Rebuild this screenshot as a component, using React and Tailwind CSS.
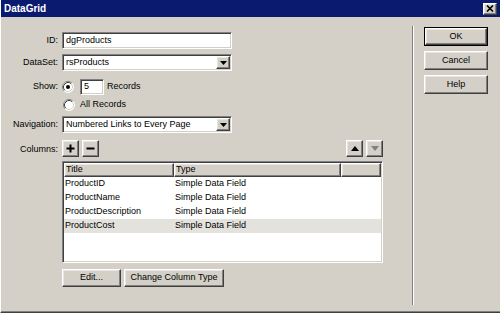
import React from "react";

const raised =
  "bg-[#d4d0c8] border border-t-white border-l-white border-r-[#404040] border-b-[#404040] shadow-[inset_-1px_-1px_0_#808080,inset_1px_1px_0_#e8e6e1]";
const sunken =
  "bg-white border border-t-[#808080] border-l-[#808080] border-r-white border-b-white shadow-[inset_1px_1px_0_#404040,inset_-1px_-1px_0_#d4d0c8]";

function Label({ children, className = "" }) {
  return <div className={"w-[57px] shrink-0 text-right " + className}>{children}</div>;
}

function DownArrow({ color = "black" }) {
  return (
    <svg width="7" height="4" viewBox="0 0 7 4">
      <path d="M0 0H7L3.5 4Z" fill={color} />
    </svg>
  );
}

function Select({ value }) {
  return (
    <div className={sunken + " w-[170px] h-[17px] flex items-center p-[1px]"}>
      <span className="flex-1 pl-[2px] leading-none">{value}</span>
      <div className={raised + " w-[14px] h-[13px] flex items-center justify-center"}>
        <DownArrow />
      </div>
    </div>
  );
}

function Radio({ checked }) {
  return (
    <svg width="12" height="12" viewBox="0 0 12 12" className="shrink-0">
      <circle cx="6" cy="6" r="5.5" fill="white" />
      <path d="M2.11 9.89A5.5 5.5 0 0 1 9.89 2.11" stroke="#808080" fill="none" />
      <path d="M2.82 9.18A4.5 4.5 0 0 1 9.18 2.82" stroke="#404040" fill="none" />
      <path d="M9.89 2.11A5.5 5.5 0 0 1 2.11 9.89" stroke="#ffffff" fill="none" />
      <path d="M9.18 2.82A4.5 4.5 0 0 1 2.82 9.18" stroke="#d4d0c8" fill="none" />
      {checked && <circle cx="6" cy="6" r="2" fill="black" />}
    </svg>
  );
}

function Btn({ children, className = "" }) {
  return (
    <div className={raised + " flex items-center justify-center " + className}>{children}</div>
  );
}

const rows = [
  ["ProductID", "Simple Data Field"],
  ["ProductName", "Simple Data Field"],
  ["ProductDescription", "Simple Data Field"],
  ["ProductCost", "Simple Data Field"],
];

export default function App() {
  return (
    <div className="w-[500px] h-[313px] bg-[#d4d0c8] flex flex-col border-l border-l-white border-b border-b-[#404040] font-['Liberation_Sans',Arial,sans-serif] text-[9px] text-black overflow-hidden">
      {/* Title bar */}
      <div className="h-[17px] shrink-0 bg-[#0a1a6e] flex items-center justify-between pl-[3px] pr-[3px]">
        <span className="text-white font-bold text-[10px] leading-none">DataGrid</span>
        <div className={raised + " w-[14px] h-[12px] flex items-center justify-center"}>
          <svg width="8" height="7" viewBox="0 0 8 7">
            <path d="M1 0.5L7 6.5M7 0.5L1 6.5" stroke="black" strokeWidth="1.6" />
          </svg>
        </div>
      </div>

      {/* Body */}
      <div className="flex-1 flex border-b border-b-[#808080]">
        {/* Left panel */}
        <div className="w-[411px] shrink-0 flex flex-col pt-[15px]">
          {/* ID */}
          <div className="flex items-center gap-[4px] h-[17px]">
            <Label>ID:</Label>
            <div className={sunken + " w-[170px] h-[17px] flex items-center pl-[3px]"}>dgProducts</div>
          </div>
          {/* DataSet */}
          <div className="flex items-center gap-[4px] h-[17px] mt-[5px]">
            <Label>DataSet:</Label>
            <Select value="rsProducts" />
          </div>
          {/* Show */}
          <div className="flex items-center gap-[4px] h-[16px] mt-[8px]">
            <Label>Show:</Label>
            <Radio checked />
            <div className={sunken + " w-[24px] h-[16px] ml-[2px] flex items-center pl-[3px]"}>5</div>
            <span className="ml-[-1px]">Records</span>
          </div>
          {/* All records */}
          <div className="flex items-center h-[16px] mt-[2px] pl-[62px] gap-[5px]">
            <Radio />
            <span>All Records</span>
          </div>
          {/* Navigation */}
          <div className="flex items-center gap-[4px] h-[17px] mt-[3px]">
            <Label>Navigation:</Label>
            <Select value="Numbered Links to Every Page" />
          </div>
          {/* Columns */}
          <div className="flex items-end gap-[4px] h-[17px] mt-[7px]">
            <Label className="pb-[1px]">Columns:</Label>
            <div className="w-[321px] flex items-center justify-between">
              <div className="flex gap-[3px]">
                <Btn className="w-[17px] h-[17px]">
                  <svg width="9" height="9" viewBox="0 0 9 9">
                    <path d="M4.5 0.5V8.5M0.5 4.5H8.5" stroke="black" strokeWidth="2" />
                  </svg>
                </Btn>
                <Btn className="w-[17px] h-[17px]">
                  <svg width="9" height="9" viewBox="0 0 9 9">
                    <path d="M0.5 4.5H8.5" stroke="black" strokeWidth="2" />
                  </svg>
                </Btn>
              </div>
              <div className="flex gap-[3px]">
                <Btn className="w-[17px] h-[17px]">
                  <svg width="8" height="5" viewBox="0 0 8 5">
                    <path d="M0 5H8L4 0Z" fill="black" />
                  </svg>
                </Btn>
                <Btn className="w-[17px] h-[17px]">
                  <svg width="8" height="5" viewBox="0 0 8 5">
                    <path d="M0 0H8L4 5Z" fill="#808080" />
                  </svg>
                </Btn>
              </div>
            </div>
          </div>
          {/* List */}
          <div className="pl-[61px] mt-[4px]">
            <div className={sunken + " w-[321px] h-[102px] p-[1px] flex flex-col"}>
              <div className="flex h-[14px] shrink-0">
                <div className={raised + " w-[110px] pl-[1px] flex items-center"}>Title</div>
                <div className={raised + " w-[167px] pl-[1px] flex items-center"}>Type</div>
                <div className={raised + " flex-1"} />
              </div>
              {rows.map(([t, ty], i) => (
                <div
                  key={t}
                  className={
                    "flex h-[14px] items-center " + (i === 3 ? "bg-[#e4e2dd]" : "bg-white")
                  }
                >
                  <span className="w-[110px] pl-[1px]">{t}</span>
                  <span className="pl-[1px]">{ty}</span>
                </div>
              ))}
            </div>
          </div>
          {/* Bottom buttons */}
          <div className="flex gap-[3px] pl-[61px] mt-[6px]">
            <Btn className="w-[59px] h-[18px]">Edit...</Btn>
            <Btn className="w-[100px] h-[18px]">Change Column Type</Btn>
          </div>
        </div>

        {/* Separator */}
        <div className="w-[2px] h-[279px] mt-[9px] border-l border-l-[#808080] border-r border-r-white shrink-0" />

        {/* Right panel */}
        <div className="flex flex-col gap-[5px] pl-[10px] pt-[10px]">
          <div className="w-[64px] h-[19px] border border-black">
            <Btn className="w-full h-full">OK</Btn>
          </div>
          <Btn className="w-[64px] h-[19px]">Cancel</Btn>
          <Btn className="w-[64px] h-[19px]">Help</Btn>
        </div>
      </div>
    </div>
  );
}
